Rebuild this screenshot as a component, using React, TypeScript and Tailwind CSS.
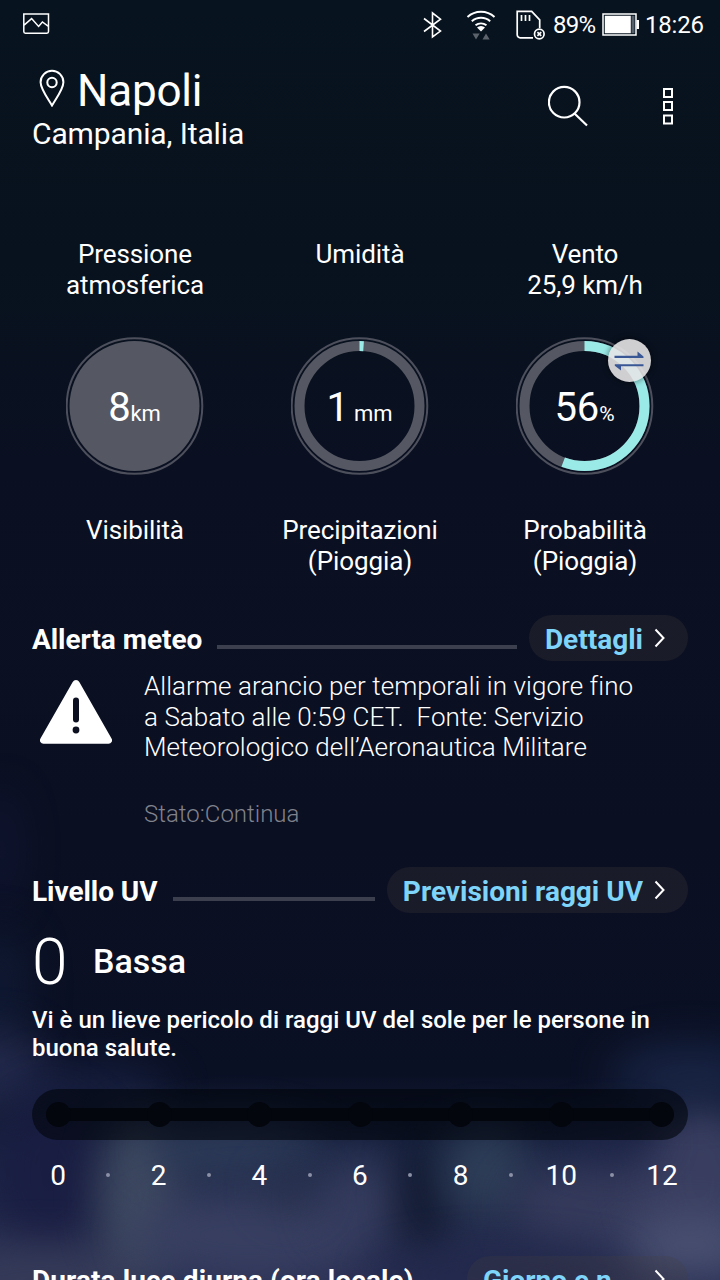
import type { ReactNode } from "react";

function Backdrop() {
  const clouds: [number, number, number, number, string, number][] = [
    [0, 850, 16, 60, "#141b40", 0.6],
    [0, 985, 30, 60, "#111d38", 0.7],
    [-10, 1070, 60, 40, "#272e52", 0.85],
    [90, 1090, 80, 26, "#1b2448", 0.7],
    [50, 1175, 60, 80, "#191d42", 0.9],
    [40, 1280, 120, 36, "#363b59", 0.95],
    [140, 1195, 42, 80, "#404b62", 0.95],
    [235, 1150, 90, 30, "#2f3d5b", 0.9],
    [250, 1235, 120, 44, "#394062", 0.95],
    [360, 1200, 46, 46, "#373e60", 0.85],
    [290, 1190, 26, 22, "#27304c", 0.8],
    [424, 1195, 24, 60, "#10182d", 0.95],
    [485, 1170, 44, 46, "#2f3f59", 0.95],
    [600, 1205, 90, 46, "#373c5d", 0.9],
    [700, 1180, 60, 80, "#3b4062", 0.95],
    [690, 1245, 70, 30, "#4a5172", 0.95],
    [500, 1275, 130, 26, "#20274a", 0.9],
    [690, 1075, 80, 30, "#1b284a", 0.85],
    [610, 1140, 50, 18, "#20264c", 0.8],
  ];
  return (
    <svg className="absolute inset-0" width="720" height="1280" viewBox="0 0 720 1280" aria-hidden="true">
      <defs>
        <linearGradient id="sky" x1="0" y1="0" x2="0" y2="1">
          <stop offset="0" stopColor="#07131e" />
          <stop offset="0.2" stopColor="#08121e" />
          <stop offset="0.36" stopColor="#0a1021" />
          <stop offset="0.65" stopColor="#0b0f22" />
          <stop offset="0.84" stopColor="#0a1024" />
          <stop offset="0.9" stopColor="#1a2442" />
          <stop offset="1" stopColor="#2a3054" />
        </linearGradient>
        <filter id="soft" x="-200%" y="-200%" width="500%" height="500%" colorInterpolationFilters="sRGB">
          <feGaussianBlur stdDeviation="21" />
        </filter>
      </defs>
      <rect width="720" height="1280" fill="url(#sky)" />
      {clouds.map(([cx, cy, rx, ry, fill, opacity], i) => (
        <ellipse key={i} cx={cx} cy={cy} rx={rx} ry={ry} fill={fill} opacity={opacity} filter="url(#soft)" />
      ))}
    </svg>
  );
}

function StatusBar() {
  return (
    <div className="flex h-12 items-center">
      <svg className="ml-[23px]" width="27" height="22" viewBox="0 0 27 22" fill="none" stroke="#fff" strokeWidth="1.5">
        <path d="M.8 1h24.7v17.6a1.6 1.6 0 0 1-1.6 1.6H2.4a1.6 1.6 0 0 1-1.6-1.6zM.8 12.4 8.6 5.6l7 7.8 3.8-4.5 6 4.4" />
      </svg>
      <svg className="mt-px ml-[373px]" width="19" height="28" viewBox="0 0 19 28" fill="none" stroke="#fff" strokeWidth="1.6">
        <path d="m1 7.5 16.5 12.6L9.5 26V2l8 6.2L1 20.5" />
      </svg>
      <svg className="ml-[24px]" width="30" height="32" viewBox="0 0 30 32" fill="none" stroke="#fff" strokeWidth="2">
        <path d="M1.500 9a20 20 0 0 1 27 0M5.800 13.200a14 14 0 0 1 18.400 0M9.500 17.300a9 9 0 0 1 11 0" />
        <path d="M15 23.600 11 19.600a5.600 5.600 0 0 1 8 0z" fill="#fff" stroke="none" />
        <path d="M6.500 25.500h7.200L10 31.500zM16.500 31.500h7.200L20 25.500z" fill="#5b626b" stroke="none" />
      </svg>
      <svg className="ml-[20px]" width="29" height="31" viewBox="0 0 29 31" fill="none" stroke="#fff" strokeWidth="1.700">
        <path d="M17 28.800H4.200a3 3 0 0 1-3-3V2.400h14.500l8 8.500v8M5.500 6v6M9.500 6v6M13.500 6v6" />
        <circle cx="23.300" cy="25" r="4.800" />
        <path d="m21.400 23.100 3.800 3.800m0-3.800-3.800 3.800" />
      </svg>
      <span className="ml-[8px] w-[47px] pt-0.5 text-[24px] tracking-[-0.7px]">89%</span>
      <svg className="ml-[2px]" width="37" height="23" viewBox="0 0 37 23">
        <rect x="1" y="1" width="33" height="21" fill="none" stroke="#fff" strokeWidth="1.500" />
        <path d="M2.800 2.800h26v17.400h-26zM34.500 7H37v9h-2.500z" fill="#fff" />
        <path d="M29.500 2.800h3v17.400h-3z" fill="#55606b" />
      </svg>
      <span className="ml-[6px] pt-0.5 text-[24px] tracking-[-0.2px]">18:26</span>
    </div>
  );
}

function Header() {
  return (
    <header className="flex h-[191px] items-start pt-4 pl-8">
      <div className="w-[515px]">
        <div className="flex h-[52px]">
          <svg className="mt-[5px] ml-[7px]" width="26" height="38" viewBox="0 0 26 38" fill="none" stroke="#fff" strokeWidth="2">
            <path d="M13 36.500C9.200 30 1.600 20 1.600 13.200a11.400 11.400 0 0 1 22.800 0C24.400 20 16.800 30 13 36.500z" />
            <circle cx="13" cy="13.500" r="4.700" />
          </svg>
          <h1 className="ml-3 pt-px text-[44px] leading-[52px] tracking-[-0.2px]">Napoli</h1>
        </div>
        <p className="text-[30px] leading-9 tracking-[-0.12px]">Campania, Italia</p>
      </div>
      <svg className="mt-[21px] ml-px" width="42" height="42" viewBox="0 0 42 42" fill="none" stroke="#fff" strokeWidth="2.200">
        <circle cx="16.200" cy="17.200" r="15.300" />
        <path d="m26.500 28.500 12.500 12" />
      </svg>
      <svg className="mt-6 ml-[73px]" width="10" height="37" viewBox="0 0 10 37" fill="none" stroke="#fff" strokeWidth="2">
        <path d="M1 1h8v8H1zM1 14h8v8H1zM1 27.500h8v8H1z" />
      </svg>
    </header>
  );
}

function Gauge({ value, filled, children }: { value: number; filled?: boolean; children: ReactNode }) {
  const length = 2 * Math.PI * 60;
  return (
    <div className="relative flex h-[138px] w-[138px] items-center justify-center">
      <svg className="absolute inset-0" width="138" height="138" viewBox="0 0 138 138" fill="none">
        <circle cx="68.500" cy="69" r="67.800" stroke="#4d505c" strokeWidth="2" />
        {filled ? (
          <circle cx="68.500" cy="69" r="65" fill="#555862" />
        ) : (
          <>
            <circle cx="68.500" cy="69" r="60" stroke="#555862" strokeWidth="10" />
            <circle
              cx="68.500"
              cy="69"
              r="60"
              stroke="#9aebe8"
              strokeWidth="10"
              strokeDasharray={`${length * value} ${length}`}
              transform="rotate(-90 68.500 69)"
            />
          </>
        )}
      </svg>
      {children}
    </div>
  );
}

function Metric({ top, bottom, gauge }: { top: ReactNode; bottom: ReactNode; gauge: ReactNode }) {
  return (
    <div className="flex flex-1 flex-col items-center text-center text-[26px] leading-[31px] tracking-[-0.1px]">
      <div className="h-[98px] pl-px">{top}</div>
      {gauge}
      <div className="mt-10 pl-px">{bottom}</div>
    </div>
  );
}

function Metrics() {
  return (
    <section className="ml-[22px] flex h-[376px] w-[675px]">
      <Metric
        top={<>Pressione<br />atmosferica</>}
        bottom="Visibilità"
        gauge={
          <Gauge value={0} filled>
            <p className="relative flex items-baseline pt-[3px] leading-none">
              <span className="text-[40px] leading-[48px]">8</span>
              <span className="text-[22px]">km</span>
            </p>
          </Gauge>
        }
      />
      <Metric
        top="Umidità"
        bottom={<>Precipitazioni<br />(Pioggia)</>}
        gauge={
          <Gauge value={0.011}>
            <p className="relative flex items-baseline pt-[3px] leading-none">
              <span className="text-[40px] leading-[48px]">1</span>
              <span className="ml-[5px] text-[22px]">mm</span>
            </p>
          </Gauge>
        }
      />
      <Metric
        top={<>Vento<br />25,9 km/h</>}
        bottom={<>Probabilità<br />(Pioggia)</>}
        gauge={
          <Gauge value={0.557}>
            <p className="relative flex items-baseline pt-[3px] leading-none">
              <span className="text-[40px] leading-[48px]">56</span>
              <span className="text-[21px]">%</span>
            </p>
            <div className="absolute top-[2px] left-[92px] flex h-[43px] w-[43px] items-center justify-center rounded-full bg-[#e6e4e6]/90 shadow-[0_0_5px_2px_rgba(0,0,0,0.3)]">
              <svg width="30" height="20" viewBox="0 0 30 20" fill="#3a5795">
                <path d="M.5 4.800H23.500V.6l6 5v1.500H.5zM29.500 13.200H.8v1.500L7 19.600v-4.300h22.500z" />
              </svg>
            </div>
          </Gauge>
        }
      />
    </section>
  );
}

function SectionHead({ title, link, last }: { title: string; link: string; last?: boolean }) {
  return (
    <div className="flex h-[46px] items-center text-[28px] font-bold leading-[46px]">
      <h2 className={last ? "shrink-0 whitespace-nowrap pt-[3px] tracking-[0.08px]" : "shrink-0 whitespace-nowrap pt-[3px] tracking-[-0.05px]"}>{title}</h2>
      <div className={last ? "flex-1" : "mt-[18px] mr-3 ml-[15px] h-1 flex-1 bg-[#3c404e]"} />
      <a className="flex h-[46px] shrink-0 items-center rounded-full bg-[#464141]/25 pr-[22px] pl-4 text-[#7fd4fa]">
        <span className={last ? "w-[160px] overflow-hidden pt-[3px] whitespace-nowrap" : "pt-[3px] whitespace-nowrap"}>{link}</span>
        <svg className="ml-[11px]" width="12" height="20" viewBox="0 0 12 20" fill="none" stroke="#fff" strokeWidth="2">
          <path d="m1.500 1.500 8 8.500-8 8.500" />
        </svg>
      </a>
    </div>
  );
}

function Alert() {
  return (
    <section className="h-[252px] px-8">
      <SectionHead title="Allerta meteo" link="Dettagli" />
      <div className="flex pt-[10px]">
        <svg className="mt-[9px] ml-2 shrink-0" width="72" height="64" viewBox="0 0 72 64">
          <path d="M32.700 2a3.800 3.800 0 0 1 6.600 0L71.400 58.300a3.500 3.500 0 0 1-3 5.500H3.600a3.500 3.500 0 0 1-3-5.500z" fill="#fff" />
          <path d="M36 20.500v19" stroke="#0b0f20" strokeWidth="6" strokeLinecap="round" />
          <circle cx="36" cy="50" r="3.400" fill="#0b0f20" />
        </svg>
        <div className="ml-8 font-light">
          <p className="text-[26px] leading-[30.500px] tracking-[0.06px] whitespace-pre">
            {"Allarme arancio per temporali in vigore fino\na Sabato alle 0:59 CET.  Fonte: Servizio\nMeteorologico dell’Aeronautica Militare"}
          </p>
          <p className="mt-[36px] text-[24px] leading-[30px] text-[#80828c]">Stato:Continua</p>
        </div>
      </div>
    </section>
  );
}

function UvScale() {
  const stops = [0, 2, 4, 6, 8, 10, 12];
  return (
    <>
      <div className="mt-[27px] flex h-[51px] items-center rounded-full bg-[#00030a]/60 px-[14px]">
        <div className="relative flex h-[25px] flex-1 items-center justify-between">
          <div className="absolute top-[6px] right-3 left-3 h-[13px] bg-[#04060d]" />
          {stops.map((s) => (
            <span key={s} className="relative h-[25px] w-[25px] rounded-full bg-[#04060d]" />
          ))}
        </div>
      </div>
      <div className="mt-[18px] flex justify-between px-[13px] text-[28px] leading-9">
        {stops.map((s, i) => [
          i > 0 && <span key={`dot-${s}`} className="mt-[15px] h-1 w-1 rounded-full bg-[#8b90a6]" />,
          <span key={s} className="flex w-[26px] justify-center">{s}</span>,
        ])}
      </div>
    </>
  );
}

function UvLevel() {
  return (
    <section className="h-[389px] px-8">
      <SectionHead title="Livello UV" link="Previsioni raggi UV" />
      <div className="flex h-[93px] items-center">
        <span className="w-[61px] pt-[7px] text-[64px] leading-[86px] font-light">0</span>
        <span className="pt-[2px] text-[34px] leading-10 font-medium">Bassa</span>
      </div>
      <p className="h-[56px] text-[24px] leading-7 font-medium">
        Vi è un lieve pericolo di raggi UV del sole per le persone in buona salute.
      </p>
      <UvScale />
    </section>
  );
}

export default function App() {
  return (
    <main className="relative h-[1280px] w-[720px] overflow-hidden bg-[#08121e] font-['Roboto',sans-serif] text-white">
      <Backdrop />
      <div className="relative">
        <StatusBar />
        <Header />
        <Metrics />
        <Alert />
        <UvLevel />
        <section className="px-8">
          <SectionHead title="Durata luce diurna (ora locale)" link="Giorno e n…" last />
        </section>
      </div>
    </main>
  );
}
